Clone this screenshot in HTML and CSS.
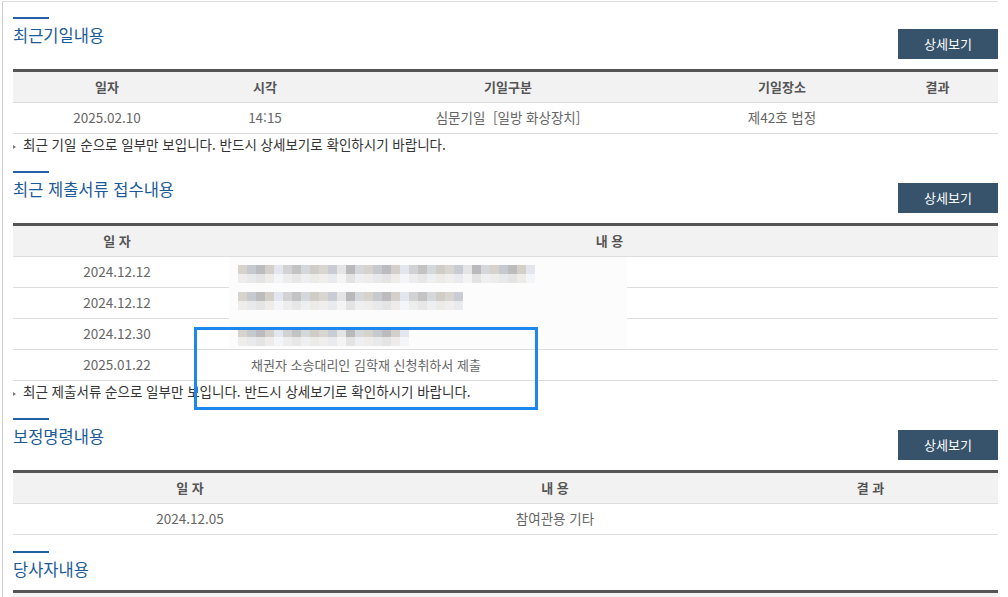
FILE: index.html
```html
<!DOCTYPE html>
<html lang="ko">
<head>
    <meta charset="UTF-8">
    <meta name="viewport" content="width=device-width, initial-scale=1.0">
    <title>사건일반내용</title>
    <link rel="stylesheet" href="styles.css">
</head>
<body>

    <div class="wrap">

        <section class="sec">
            <div class="sec-head">
                <h2>최근기일내용</h2>
                <a class="btn-more" href="#">상세보기</a>
            </div>
            <table class="tbl tbl-date">
                <colgroup>
                    <col class="c1"><col class="c2"><col class="c3"><col class="c4"><col class="c5">
                </colgroup>
                <thead>
                    <tr><th>일자</th><th>시각</th><th>기일구분</th><th>기일장소</th><th>결과</th></tr>
                </thead>
                <tbody>
                    <tr><td>2025.02.10</td><td>14:15</td><td>심문기일&nbsp; [일방 화상장치]</td><td>제42호 법정</td><td></td></tr>
                </tbody>
            </table>
            <p class="note">최근 기일 순으로 일부만 보입니다. 반드시 상세보기로 확인하시기 바랍니다.</p>
        </section>

        <section class="sec sec-docs">
            <div class="sec-head">
                <h2>최근 제출서류 접수내용</h2>
                <a class="btn-more" href="#">상세보기</a>
            </div>
            <table class="tbl tbl-docs">
                <colgroup>
                    <col class="c1"><col class="c2">
                </colgroup>
                <thead>
                    <tr><th>일 자</th><th>내 용</th></tr>
                </thead>
                <tbody>
                    <tr><td>2024.12.12</td><td class="left"></td></tr>
                    <tr><td>2024.12.12</td><td class="left"></td></tr>
                    <tr><td>2024.12.30</td><td class="left"></td></tr>
                    <tr><td>2025.01.22</td><td class="left">채권자 소송대리인 김학재 신청취하서 제출</td></tr>
                </tbody>
            </table>
            <p class="note">최근 제출서류 순으로 일부만 보입니다. 반드시 상세보기로 확인하시기 바랍니다.</p>

            <!-- redacted part of the capture -->
            <div class="redact">
                <div class="blur b1"></div>
                <div class="blur b2"></div>
                <div class="blur b3"></div>
            </div>
            <div class="mark-box"></div>
        </section>

        <section class="sec">
            <div class="sec-head">
                <h2>보정명령내용</h2>
                <a class="btn-more" href="#">상세보기</a>
            </div>
            <table class="tbl tbl-order">
                <colgroup>
                    <col class="c1"><col class="c2"><col class="c3">
                </colgroup>
                <thead>
                    <tr><th>일 자</th><th>내 용</th><th>결 과</th></tr>
                </thead>
                <tbody>
                    <tr><td>2024.12.05</td><td>참여관용 기타</td><td></td></tr>
                </tbody>
            </table>
        </section>

        <section class="sec">
            <div class="sec-head">
                <h2>당사자내용</h2>
            </div>
            <table class="tbl">
                <thead>
                    <tr><th></th><th></th><th></th><th></th></tr>
                </thead>
            </table>
        </section>

    </div>

</body>
</html>
```

FILE: styles.css
```css
body {
    margin: 0;
    font-family: "Noto Sans CJK KR", "Noto Sans", sans-serif;
    font-size: 13px;
    color: #333;
    background-color: #fff;
}
.wrap {
    width: 985px;
    margin: 1px 0 0 2px;
    padding: 15px 0 0 10px;
    border-left: 1px solid #ccc;
    border-top: 1px solid #ddd;
    min-height: 620px;
}
.sec {
    margin-bottom: 16px;
}
.sec-docs {
    position: relative;
}
.sec-head {
    display: flex;
    justify-content: space-between;
    align-items: flex-start;
    margin-bottom: 10px;
}
.sec-head h2 {
    position: relative;
    margin: 0;
    padding-top: 8px;
    font-size: 16.5px;
    font-weight: normal;
    line-height: 21px;
    color: #1b5a98;
}
.sec-head h2::before {
    content: "";
    position: absolute;
    left: 0;
    top: 0;
    width: 36px;
    height: 2px;
    background-color: #2361a6;
}
.btn-more {
    display: block;
    width: 100px;
    height: 30px;
    margin-top: 12px;
    line-height: 30px;
    text-align: center;
    background-color: #37536b;
    color: #fff;
    font-size: 13px;
    text-decoration: none;
}
.tbl {
    width: 100%;
    border-collapse: collapse;
    table-layout: fixed;
    border-top: 3px solid #555;
}
.tbl th,
.tbl td {
    padding: 0 0 1px;
    height: 29px;
    line-height: 29px;
    text-align: center;
    border-bottom: 1px solid #ddd;
    white-space: nowrap;
}
.tbl th {
    background-color: #f2f2f2;
    color: #555;
    font-weight: bold;
}
.tbl td {
    color: #666;
    font-size: 13.5px;
}
.tbl td.left {
    text-align: left;
    padding-left: 30px;
    font-size: 13px;
}
.tbl-date .c1 { width: 188px; }
.tbl-date .c2 { width: 128px; }
.tbl-date .c3 { width: 358px; }
.tbl-date .c4 { width: 190px; }
.tbl-docs .c1 { width: 208px; }
.tbl-order .c1 { width: 354px; }
.tbl-order .c2 { width: 376px; }
.note {
    position: relative;
    margin: 0;
    padding-left: 10px;
    line-height: 21px;
    font-size: 13.5px;
    color: #333;
}
.note::before {
    content: "";
    position: absolute;
    left: 0;
    top: 11px;
    border-left: 3px solid #777;
    border-top: 2px solid transparent;
    border-bottom: 2px solid transparent;
}
.redact {
    position: absolute;
    left: 216px;
    top: 86px;
    width: 398px;
    height: 91px;
    background-color: #fcfcfc;
}
.blur {
    position: absolute;
    left: 9px;
    height: 18px;
    background:
        linear-gradient(to bottom, rgba(255, 255, 255, 0) 50%, rgba(255, 255, 255, 0.6) 50%),
        repeating-linear-gradient(to right,
            #d8d2cd 0 9px, #c6c9ce 9px 18px, #bcbcbe 18px 27px, #d5cfc9 27px 36px,
            #e3e6ee 36px 45px, #d2d2d4 45px 54px, #c3c3c3 54px 63px, #d4d8da 63px 72px,
            #cfcdc6 72px 81px, #d9d6d2 81px 90px, #c9ccd4 90px 99px, #e4e4e4 99px 108px,
            #b9b9bb 108px 117px, #d6d7db 117px 126px);
}
.b1 { top: 8px; width: 297px; }
.b2 { top: 35px; width: 225px; }
.b3 { top: 72px; width: 171px; height: 17px; }
.mark-box {
    position: absolute;
    left: 181px;
    top: 156px;
    width: 338px;
    height: 77px;
    border: 3px solid #1c87ef;
}
```
